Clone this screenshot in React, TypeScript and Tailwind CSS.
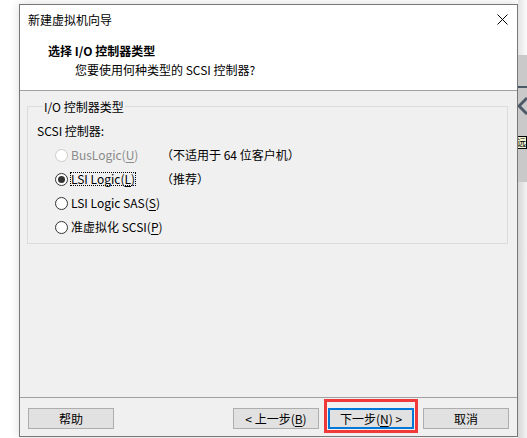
import React from "react";

const Radio = ({ checked, disabled }: { checked?: boolean; disabled?: boolean }) => (
  <span
    className={
      "flex h-[13px] w-[13px] shrink-0 items-center justify-center rounded-full border bg-white " +
      (disabled ? "border-[#cccccc] bg-[#f7f7f7]" : "border-[#333333]")
    }
  >
    {checked && <span className="h-[7px] w-[7px] rounded-full bg-[#333333]" />}
  </span>
);

const Btn = ({ children, primary }: { children: React.ReactNode; primary?: boolean }) => (
  <button
    className={
      "flex h-[21px] w-[86px] items-center justify-center bg-[#e1e1e1] text-[12px] leading-none text-black " +
      (primary ? "border-2 border-[#0078d7]" : "border border-[#adadad]")
    }
  >
    {children}
  </button>
);

const App = () => {
  return (
    <div className="flex h-[438px] w-[527px] overflow-hidden bg-white font-['Noto_Sans_CJK_SC','Microsoft_YaHei',sans-serif] text-[12px] text-black">
      <div className="w-[19px] shrink-0" />

      {/* dialog */}
      <div className="mt-[4px] flex h-[433px] w-[499px] shrink-0 flex-col border border-[#777777] bg-[#f0f0f0] shadow-[0_0_10px_rgba(0,0,0,0.15)]">
        <div className="flex h-[86px] flex-col border-b border-[#a0a0a0] bg-white">
          <div className="flex h-[28px] items-center justify-between pl-[8px] pr-[9px]">
            <span className="leading-[17px]">新建虚拟机向导</span>
            <svg width="11" height="11" viewBox="0 0 11 11" className="mt-[1px]">
              <path d="M0.5 0.5L10.5 10.5M10.5 0.5L0.5 10.5" stroke="#000" strokeWidth="1" />
            </svg>
          </div>
          <div className="pl-[28px] pt-[9px] font-bold leading-[17px]">选择 I/O 控制器类型</div>
          <div className="mt-[2px] pl-[55px] leading-[17px]">您要使用何种类型的 SCSI 控制器?</div>
        </div>

        <div className="relative flex-1">
          <fieldset className="ml-[7px] mr-[9px] mt-[7px] border border-[#dcdcdc] pb-[4px] pl-[9px]">
            <legend className="ml-[6px] px-[1px] leading-[17px]">I/O 控制器类型</legend>
            <div className="mt-[7px] leading-[17px]">SCSI 控制器:</div>
            <div className="mt-[4px] flex flex-col pl-[18px]">
              <div className="flex h-[24px] items-center">
                <Radio disabled />
                <span className="ml-[3px] w-[90px] text-[#8a8a8a]">
                  BusLogic(<u className="underline-offset-2">U</u>)
                </span>
                <span>（不适用于 64 位客户机）</span>
              </div>
              <div className="flex h-[24px] items-center">
                <Radio checked />
                <span className="ml-[2px] mr-[25px] border border-dotted border-black leading-[12px]">
                  LSI Logic(<u className="underline-offset-2">L</u>)
                </span>
                <span>（推荐）</span>
              </div>
              <div className="flex h-[24px] items-center">
                <Radio />
                <span className="ml-[3px]">
                  LSI Logic SAS(<u className="underline-offset-2">S</u>)
                </span>
              </div>
              <div className="flex h-[24px] items-center">
                <Radio />
                <span className="ml-[3px]">
                  准虚拟化 SCSI(<u className="underline-offset-2">P</u>)
                </span>
              </div>
            </div>
          </fieldset>
        </div>

        <div className="relative flex h-[39px] items-start border-t border-[#a0a0a0] pl-[8px] pr-[8px] pt-[10px]">
          <Btn>帮助</Btn>
          <div className="flex-1" />
          <Btn>&lt; 上一步(<u className="underline-offset-2">B</u>)</Btn>
          <div className="w-[9px]" />
          <Btn primary>
            下一步(<u className="underline-offset-2">N</u>) &gt;
          </Btn>
          <div className="w-[9px]" />
          <Btn>取消</Btn>
          {/* red highlight */}
          <div className="absolute left-[304px] top-[1px] h-[34px] w-[94px] border-[3px] border-[#f03a3a]" />
        </div>
      </div>

      {/* background window strip */}
      <div className="flex w-[9px] shrink-0 flex-col bg-gradient-to-r from-[#d6d6d6] to-[#f3f3f3]">
        <div className="h-[55px] bg-gradient-to-r from-[#e4e4e4] to-[#fbfbfb]" />
        <div className="relative h-[127px] overflow-hidden bg-[#c9c9c9]">
          <div className="mt-[31px] h-[2px] w-[9px] bg-[#4c5a68]" />
          <svg width="9" height="20" viewBox="0 0 9 20" className="mt-[8px]">
            <path d="M9 2L1 10L9 18" stroke="#4c5a68" strokeWidth="3" fill="none" />
          </svg>
          <div className="mt-[20px] -ml-[2px] w-[11px] overflow-hidden border border-black bg-[#f3f0cc] text-[9px] leading-[11px]">远</div>
        </div>
        <div className="flex-1" />
      </div>
    </div>
  );
};

export default App;
